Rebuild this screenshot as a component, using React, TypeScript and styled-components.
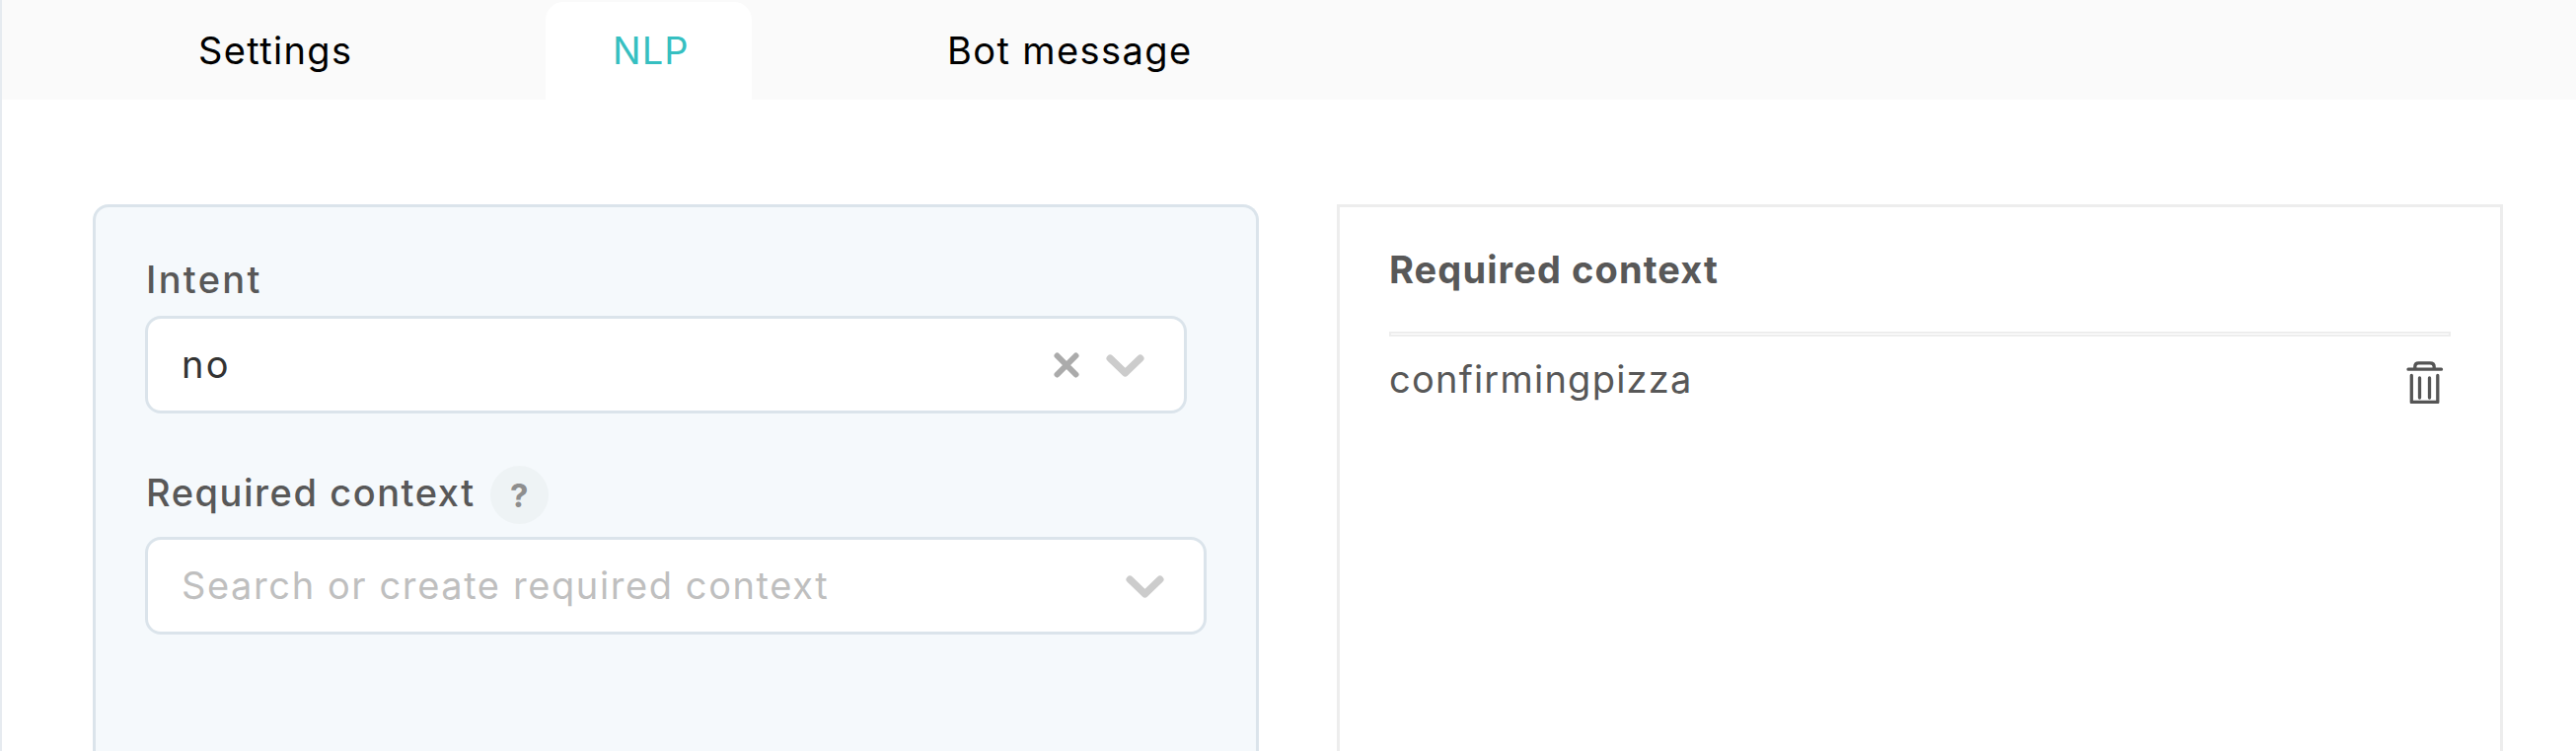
import React from "react";
import styled, { createGlobalStyle } from "styled-components";

const GlobalStyle = createGlobalStyle`
  * { box-sizing: border-box; }
  body {
    margin: 0;
    background: #fff;
    overflow: hidden;
    font-family: Inter, "Liberation Sans", sans-serif;
    font-size: 38px;
    line-height: 46px;
    color: #585858;
  }
`;

const Page = styled.main`
  display: flex;
  flex-direction: column;
  height: 761px;
  border-left: 2px solid #e6ebf0;
`;

const TabBar = styled.nav`
  display: flex;
  gap: 130px;
  height: 101px;
  padding: 2px 0 0 131px;
  background: #fafafa;
`;

const Tab = styled.div<{ $width: number; $spacing: number; $active?: boolean }>`
  flex: none;
  width: ${(p) => p.$width}px;
  padding: 26px 0 0 68px;
  border-radius: 18px 18px 0 0;
  letter-spacing: ${(p) => p.$spacing}px;
  white-space: nowrap;
  color: ${(p) => (p.$active ? "#36bfc1" : "#000")};
  background: ${(p) => (p.$active ? "#fff" : "transparent")};
`;

const Content = styled.div`
  display: flex;
  flex: 1;
  gap: 79px;
  padding: 106px 74px 0 92px;
`;

const FormPanel = styled.section`
  flex: 1;
  padding: 50px 50px 0;
  border: 3px solid #dbe4eb;
  border-bottom: 0;
  border-radius: 16px 16px 0 0;
  background: #f5f9fc;
`;

const Label = styled.div<{ $spacing: number }>`
  display: flex;
  align-items: center;
  padding-left: 1px;
  font-weight: 500;
  letter-spacing: ${(p) => p.$spacing}px;
  white-space: nowrap;
`;

const IntentLabel = styled(Label)`
  height: 46px;
  margin-bottom: 14px;
`;

const ContextLabel = styled(Label)`
  height: 59px;
  margin: 53px 0 13px;
`;

const HelpBadge = styled.span`
  display: flex;
  align-items: center;
  justify-content: center;
  width: 59px;
  height: 59px;
  margin-left: 15px;
  padding-top: 1px;
  border-radius: 50%;
  background: #eef3f5;
  color: #8e8e8e;
  font-size: 33px;
  font-weight: 700;
  letter-spacing: 0;
`;

const LabelText = styled.span`
  height: 51px;
`;

const Select = styled.div<{ $inset?: number }>`
  display: flex;
  align-items: center;
  height: 99px;
  margin-right: ${(p) => p.$inset ?? 0}px;
  padding: 0 40px 0 34px;
  border: 3px solid #dbe4eb;
  border-radius: 16px;
  background: #fff;
`;

const Value = styled.span<{ $spacing: number; $muted?: boolean }>`
  flex: 1;
  padding-bottom: 2px;
  letter-spacing: ${(p) => p.$spacing}px;
  color: ${(p) => (p.$muted ? "#bfbfbf" : "#333")};
  white-space: nowrap;
`;

const Icon = styled.svg`
  display: block;
  flex: none;
  fill: none;
  stroke-linecap: round;
  stroke-linejoin: round;
`;

const ClearIcon = styled(Icon)`
  margin-right: 27px;
  stroke: #ababab;
  stroke-width: 6;
`;

const ChevronIcon = styled(Icon)`
  margin-top: 3px;
  stroke: #ccc;
  stroke-width: 7.4;
`;

const TrashIcon = styled(Icon)`
  margin: 15px 7px 0 0;
  stroke: #555;
  stroke-width: 3.3;
`;

const ListPanel = styled.section`
  flex: 1;
  padding: 40px 50px 0;
  border: 3px solid #ededed;
  border-bottom: 0;
`;

const ListTitle = styled.h2`
  margin: 0;
  font-size: 38px;
  font-weight: 650;
  line-height: 46px;
  letter-spacing: 1.1px;
`;

const Divider = styled.hr`
  height: 5px;
  margin: 40px 0 9px;
  border: 2px solid #ededed;
  background: #fff;
`;

const ListRow = styled.div`
  display: flex;
  align-items: flex-start;
  justify-content: space-between;
  letter-spacing: 1.23px;
`;

const RowName = styled.span`
  padding-top: 11px;
`;

function Chevron() {
  return (
    <ChevronIcon width="39" height="24" viewBox="0 0 39 24">
      <path d="M4.2 4.2 19.5 18.9 34.8 4.2" />
    </ChevronIcon>
  );
}

function Clear() {
  return (
    <ClearIcon width="26" height="26" viewBox="0 0 26 26">
      <path d="M3.5 3.5l19 19M22.5 3.5l-19 19" />
    </ClearIcon>
  );
}

function Trash() {
  return (
    <TrashIcon width="38" height="44" viewBox="0 0 38 44">
      <path d="M2 9.2h33.5M8.8 8.5V6.5Q8.8 2.8 12.5 2.8H24Q28.2 2.8 28.2 6.5v2M5.3 15.5v27h26.5v-27M13.5 18v20M23.5 18v20" />
    </TrashIcon>
  );
}

export default function App() {
  return (
    <>
      <GlobalStyle />
      <Page>
        <TabBar>
          <Tab $width={290} $spacing={1.37}>Settings</Tab>
          <Tab $width={209} $spacing={1.1} $active>NLP</Tab>
          <Tab $width={386} $spacing={1.4}>Bot message</Tab>
        </TabBar>
        <Content>
          <FormPanel>
            <IntentLabel $spacing={2.3}>Intent</IntentLabel>
            <Select $inset={20}>
              <Value $spacing={2.2}>no</Value>
              <Clear />
              <Chevron />
            </Select>
            <ContextLabel $spacing={1.55}>
              <LabelText>Required context</LabelText>
              <HelpBadge>?</HelpBadge>
            </ContextLabel>
            <Select>
              <Value $spacing={1.6} $muted>Search or create required context</Value>
              <Chevron />
            </Select>
          </FormPanel>
          <ListPanel>
            <ListTitle>Required context</ListTitle>
            <Divider />
            <ListRow>
              <RowName>confirmingpizza</RowName>
              <Trash />
            </ListRow>
          </ListPanel>
        </Content>
      </Page>
    </>
  );
}
